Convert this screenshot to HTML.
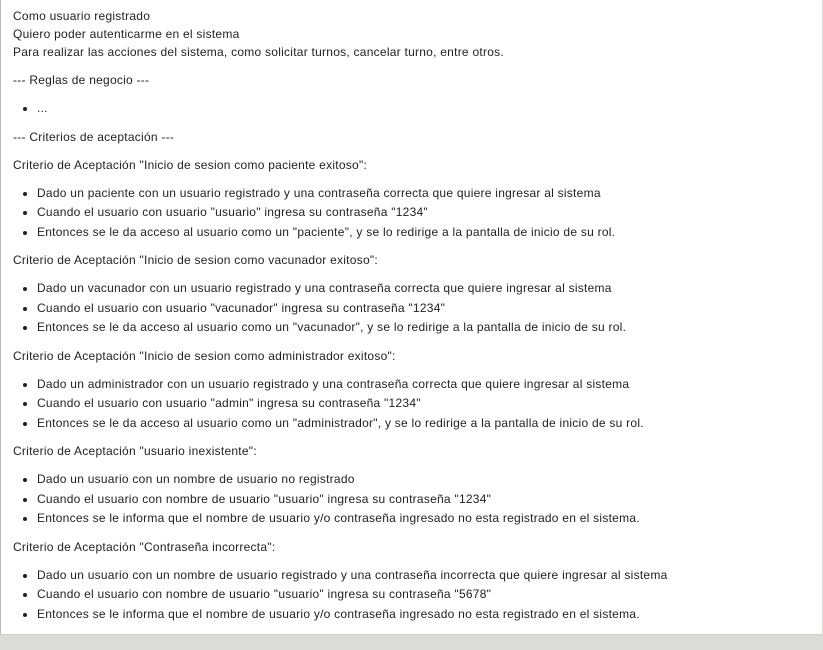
<!DOCTYPE html>
<html><head><meta charset="utf-8"><style>
html,body{margin:0;padding:0;background:#dcdcd7;width:823px;height:650px;overflow:hidden}
.box{background:#fff;border-left:1px solid #bdbdb8;border-bottom:1px solid #d0d0cb;width:822px;height:635px;box-sizing:border-box;padding:7px 0 0 12px;font-family:"Liberation Sans",sans-serif;font-size:12px;letter-spacing:0.25px;color:#222}
p{margin:0 0 10px;line-height:18px}
ul{margin:0 0 9px;padding-left:24px}
li{line-height:19.5px}
</style></head><body><div class="box">
<p>Como usuario registrado<br>Quiero poder autenticarme en el sistema<br>Para realizar las acciones del sistema, como solicitar turnos, cancelar turno, entre otros.</p>
<p>--- Reglas de negocio ---</p>
<ul><li>...</li></ul>
<p>--- Criterios de aceptación ---</p>
<p>Criterio de Aceptación "Inicio de sesion como paciente exitoso":</p>
<ul><li>Dado un paciente con un usuario registrado y una contraseña correcta que quiere ingresar al sistema</li><li>Cuando el usuario con usuario "usuario" ingresa su contraseña "1234"</li><li>Entonces se le da acceso al usuario como un "paciente", y se lo redirige a la pantalla de inicio de su rol.</li></ul>
<p>Criterio de Aceptación "Inicio de sesion como vacunador exitoso":</p>
<ul><li>Dado un vacunador con un usuario registrado y una contraseña correcta que quiere ingresar al sistema</li><li>Cuando el usuario con usuario "vacunador" ingresa su contraseña "1234"</li><li>Entonces se le da acceso al usuario como un "vacunador", y se lo redirige a la pantalla de inicio de su rol.</li></ul>
<p>Criterio de Aceptación "Inicio de sesion como administrador exitoso":</p>
<ul><li>Dado un administrador con un usuario registrado y una contraseña correcta que quiere ingresar al sistema</li><li>Cuando el usuario con usuario "admin" ingresa su contraseña "1234"</li><li>Entonces se le da acceso al usuario como un "administrador", y se lo redirige a la pantalla de inicio de su rol.</li></ul>
<p>Criterio de Aceptación "usuario inexistente":</p>
<ul><li>Dado un usuario con un nombre de usuario no registrado</li><li>Cuando el usuario con nombre de usuario "usuario" ingresa su contraseña "1234"</li><li>Entonces se le informa que el nombre de usuario y/o contraseña ingresado no esta registrado en el sistema.</li></ul>
<p>Criterio de Aceptación "Contraseña incorrecta":</p>
<ul><li>Dado un usuario con un nombre de usuario registrado y una contraseña incorrecta que quiere ingresar al sistema</li><li>Cuando el usuario con nombre de usuario "usuario" ingresa su contraseña "5678"</li><li>Entonces se le informa que el nombre de usuario y/o contraseña ingresado no esta registrado en el sistema.</li></ul>
</div></body></html>
